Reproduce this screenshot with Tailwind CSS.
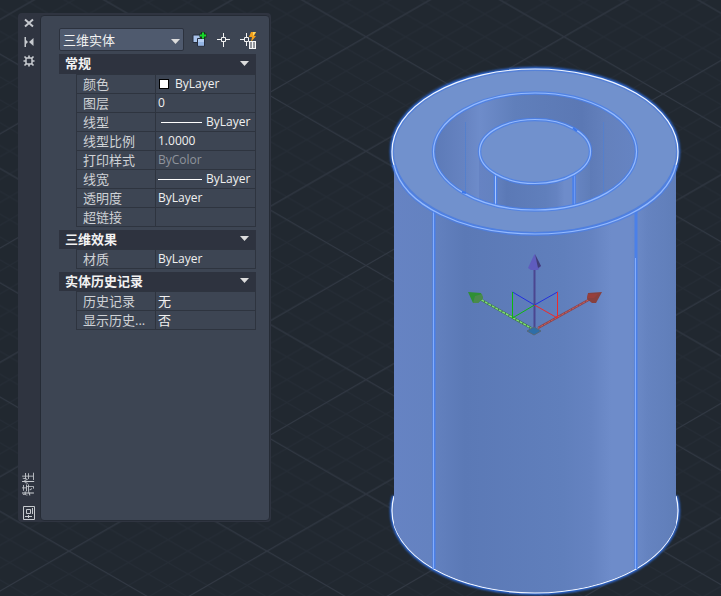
<!DOCTYPE html>
<html lang="zh-CN">

<head>
    <meta charset="utf-8">
    <meta name="viewport" content="width=device-width, initial-scale=1.0">
    <title>特性</title>
    <script src="https://cdn.jsdelivr.net/npm/@tailwindcss/browser@4"></script>
</head>

<body class="relative isolate flex min-h-screen overflow-hidden bg-[#212830] pt-[13px] pl-[18px] pb-[74px] font-['Open_Sans','Noto_Sans_CJK_SC',sans-serif] text-xs">

    <!-- MODEL SPACE -->
    <svg class="absolute inset-0 -z-10 h-full w-full" role="img" aria-label="三维实体">
        <defs>
            <pattern id="minor" x="69" y="94" width="39.6" height="22.86" patternUnits="userSpaceOnUse">
                <path d="M0 0L39.6 22.86M0 22.86L39.6 0" stroke="#262d37" fill="none" />
            </pattern>
            <pattern id="major" x="69" y="94" width="198" height="114.3" patternUnits="userSpaceOnUse">
                <path d="M0 0L198 114.3M0 114.3L198 0" stroke="#323944" fill="none" />
            </pattern>
            <linearGradient id="side">
                <stop offset="0" stop-color="#6683c3" />
                <stop offset=".13" stop-color="#6482c0" />
                <stop offset=".25" stop-color="#5b79b6" />
                <stop offset=".6" stop-color="#607fbc" />
                <stop offset=".7" stop-color="#6583c1" />
                <stop offset=".77" stop-color="#6e8cca" />
                <stop offset=".84" stop-color="#6e8cca" />
                <stop offset=".9" stop-color="#6583c0" />
                <stop offset="1" stop-color="#607eb9" />
            </linearGradient>
            <linearGradient id="bore">
                <stop offset="0" stop-color="#5c7ab7" />
                <stop offset=".15" stop-color="#6683c1" />
                <stop offset=".23" stop-color="#6e8cca" />
                <stop offset=".4" stop-color="#607fbb" />
                <stop offset=".73" stop-color="#5b78b4" />
                <stop offset=".85" stop-color="#6481bd" />
                <stop offset="1" stop-color="#6684c3" />
            </linearGradient>
            <clipPath id="boreClip">
                <ellipse cx="535" cy="152" rx="101" ry="58" />
            </clipPath>
            <filter id="glow" x="-10%" y="-10%" width="120%" height="120%">
                <feGaussianBlur stdDeviation="1" />
            </filter>
        </defs>
        <rect width="100%" height="100%" fill="url(#minor)" />
        <rect width="100%" height="100%" fill="url(#major)" />

        <!-- outer cylinder -->
        <g fill="none" stroke="#2f6de0" stroke-width="4" filter="url(#glow)">
            <ellipse cx="535" cy="151.500" rx="143" ry="82.500" />
            <path d="M394 496Q392 503 392 511A143 82 0 0 0 678 511Q678 503 676 496" />
        </g>
        <path d="M394 496Q392 503 392 511A143 82 0 0 0 678 511Q678 503 676 496" fill="#6380bd" stroke="#f0f5ff" stroke-width="1.200" />
        <path d="M394 151H676V525C662 565 604 592 535 592S408 565 394 525Z" fill="url(#side)" />
        <path d="M434 210V569M636 210V569" fill="none" stroke="#4b80e8" stroke-width="3" />
        <path d="M433.500 210V569M635.500 258V569" fill="none" stroke="#82adff" />

        <!-- top ring -->
        <ellipse cx="535" cy="151.500" rx="143" ry="82.500" fill="#7191cd" />
        <ellipse cx="535" cy="151.500" rx="142" ry="81.500" fill="none" stroke="#4478e0" stroke-width="2" stroke-opacity=".6" />
        <path d="M394 165Q392 160 392 151.500A143 82.500 0 0 1 678 151.500Q678 160 676 165" fill="none" stroke="#f0f5ff" stroke-width="1.200" />
        <path d="M394 165C403 205 463 234 535 234S667 205 676 165" fill="none" stroke="#4a7fe8" stroke-width="4" stroke-opacity=".7" />
        <path d="M394 165C403 205 463 234 535 234S667 205 676 165" fill="none" stroke="#94baff" stroke-width="1.200" />

        <!-- bore and inner core -->
        <g clip-path="url(#boreClip)">
            <rect x="433" y="93" width="204" height="118" fill="url(#bore)" />
            <path d="M465.500 122V195M603.500 122V195" stroke="#5580cc" />
            <path d="M479 152H590V212H479Z" fill="url(#side)" />
            <path d="M495.500 174V208M574 174V208" stroke="#4b80e8" stroke-width="3.500" />
            <path d="M495.500 174V208" stroke="#a5c5ff" />
            <path d="M574.500 174V208" stroke="#6b99f5" />
        </g>
        <ellipse cx="535" cy="151.500" rx="55.500" ry="32" fill="#7191cd" />
        <g fill="none">
            <g stroke="#4a7fe8" stroke-width="3.500" stroke-opacity=".8">
                <ellipse cx="535" cy="151.500" rx="101.500" ry="58.500" />
                <ellipse cx="535" cy="151.500" rx="55.500" ry="32" />
            </g>
            <g stroke="#94baff" stroke-width="1.200">
                <ellipse cx="535" cy="151.500" rx="101.500" ry="58.500" />
                <ellipse cx="535" cy="151.500" rx="55.500" ry="32" />
            </g>
        </g>
        <path d="M573 128l4 3M462 192l4 1" stroke="#3b76ea" stroke-width="2" />

        <!-- move gizmo -->
        <g fill="none">
            <path d="M534.500 269V328" stroke="#4b4690" stroke-width="2" />
            <path d="M478 298L531 328" stroke="#3c6f4c" stroke-width="2.500" />
            <path d="M478 298L531 328" stroke="#7fdf72" stroke-width="1.500" stroke-dasharray="3 1" />
            <path d="M592 298L538 328" stroke="#8c4550" stroke-width="2.500" />
            <path d="M592 298L538 328" stroke="#c25e5a" stroke-dasharray="3 1" />
            <path d="M512.500 292L534.500 305L557.500 292" stroke="#2330dd" />
            <path d="M512.500 292V318L534.500 305" stroke="#0db80d" />
            <path d="M534.500 305L557.500 318V292" stroke="#f02a2a" />
        </g>
        <path d="M534.500 254L541 266L538 270H531L528 268Z" fill="#5f5cbe" />
        <path d="M535 254L541 266L538 268Z" fill="#403e78" />
        <path d="M468 292L481 293L483 298L478 303H473Z" fill="#2f8f35" />
        <path d="M475 296L482 294L483 298L478 303H473Z" fill="#4a8a4c" />
        <path d="M602 292L588 293L587 299L592 303H596Z" fill="#87403f" />
        <path d="M588 294H598L594 298H587Z" fill="#973f3c" />
        <path d="M527 331L534 327L541 331L534 335Z" fill="#2e6ea8" stroke="#576878" />
    </svg>

    <!-- PROPERTIES PALETTE -->
    <aside class="flex w-[253px] rounded-sm bg-[#2f3440] pt-0.5 pr-px pb-px">
        <div class="flex w-[22px] shrink-0 flex-col items-center pb-px text-[#c6c9ce]">
            <button class="mt-px h-[14px]" aria-label="关闭">
                <svg class="size-[14px]" viewBox="0 0 14 14" fill="none" stroke="currentColor" stroke-width="2">
                    <path d="M3 3.500L11 10.500M11 3.500L3 10.500" />
                </svg>
            </button>
            <button class="mt-[5px] h-[14px]" aria-label="自动隐藏">
                <svg class="size-[14px]" viewBox="0 0 14 14" fill="currentColor">
                    <path d="M2.500 2H4v3l2 2-2 2v3H2.500zM11.500 3v8L7 7z" />
                </svg>
            </button>
            <button class="mt-[5px] h-[14px]" aria-label="特性设置">
                <svg class="size-[14px]" viewBox="0 0 14 14" fill="none" stroke="currentColor">
                    <path d="M5 4h4l1 1v4l-1 1H5L4 9V5z" stroke-width="1.500" />
                    <path d="M7 1.500V4M7 10v2.500M1.500 7H4M10 7h2.500M2.500 2.500l2 2M9.500 9.500l2 2M11.500 2.500l-2 2M4.500 9.500l-2 2" stroke-width="1.700" />
                </svg>
            </button>
            <div class="mt-auto mb-2.5 rotate-180 text-[12px] leading-[14px] [text-orientation:sideways] [writing-mode:vertical-rl]">特性</div>
            <button class="h-[14px]" aria-label="特性菜单">
                <svg class="h-[14px] w-3" viewBox="0 0 12 14" fill="none" stroke="currentColor">
                    <path d="M.5.500h11v13H.5zM3.500 3.500h4v4h-4zM9.500 2v6M2 10.500h7M5.500 9v3" />
                </svg>
            </button>
        </div>

        <main class="min-w-0 flex-1 rounded-sm border border-[#252b35] bg-[#3d4553] pt-3 pr-[13px] pl-[18px]">
            <div class="flex items-center">
                <div class="relative w-[125px] shrink-0">
                    <select aria-label="选择对象类型" class="block h-[23px] w-full appearance-none rounded-xs border border-[#2c323e] bg-[#4f5a6e] pl-[3px] text-[13px] leading-5 text-[#f2f2f2]">
                        <option>三维实体</option>
                    </select>
                    <svg class="pointer-events-none absolute top-[11px] right-1 h-[5px] w-[9px]" viewBox="0 0 9 5" fill="#dcdcdc"><path d="M0 0h9L4.500 5z" /></svg>
                </div>
                <button class="ml-2 size-4 shrink-0" aria-label="切换 PICKADD 系统变量的值">
                    <svg class="size-4" viewBox="0 0 16 16">
                        <path d="M1 3h7.500v7.500H1z" fill="#a9c3ea" stroke="#252c3c" />
                        <path d="M5.500 6.500h7V14h-7z" fill="#b4cdf2" stroke="#252c3c" />
                        <path d="M6 10h6v3.500H6z" fill="#94b5e4" />
                        <path d="M11 0v7M7.500 3.500h7" stroke="#14361b" stroke-width="4" />
                        <path d="M11 .5v6M8 3.500h6" stroke="#18d52a" stroke-width="2" />
                    </svg>
                </button>
                <button class="ml-[7px] size-4 shrink-0" aria-label="选择对象">
                    <svg class="size-4" viewBox="0 0 16 16" fill="none" stroke="#f2f2f2">
                        <path d="M8.500 1v5M8.500 10v5M2 7.500h4M11 7.500h4M6.500 5.500h4v4h-4z" />
                    </svg>
                </button>
                <button class="ml-2 size-[18px] shrink-0" aria-label="快速选择">
                    <svg class="size-[18px]" viewBox="0 0 18 18" fill="none">
                        <path d="M7.500 2v4M7.500 11v4M1 8.500h4M5.500 6.500h4v4h-4z" stroke="#f2f2f2" />
                        <path d="M12 1h5l-2 4h2l-5 6 1-5h-3z" fill="#f2a01d" />
                        <path d="M14 1h3l-3 4z" fill="#ffd65e" />
                        <path d="M10 10h7v8h-7z" fill="#f5f5f5" />
                        <path d="M11 12h2M14 12h2M11 14h2M14 14h2M11 16h2M14 16h2" stroke="#303642" />
                    </svg>
                </button>
            </div>

            <section class="mt-[3px]">
                <button class="flex h-5 w-full items-center justify-between bg-[#2e333f] pr-[7px] pb-0.5 pl-1.5 text-[13px] leading-4 font-bold text-[#f2f2f2]" aria-expanded="true">
                    常规
                    <svg class="h-[5px] w-[9px]" viewBox="0 0 9 5" fill="#dcdcdc"><path d="M0 0h9L4.500 5z" /></svg>
                </button>
                <div class="pl-[17px]">
                    <table class="w-full table-fixed border-collapse text-[#f0f0f0] [&_td]:border [&_td]:border-[#2e343f] [&_td]:px-0.5 [&_th]:w-[79px] [&_th]:border [&_th]:border-[#2e343f] [&_th]:pl-1.5 [&_th]:text-left [&_th]:text-[13px] [&_th]:font-normal [&_th]:whitespace-nowrap [&_th]:text-[#cfd2d6] [&_tr]:h-[19px] [&_tr]:leading-4">
                        <tr>
                            <th scope="row">颜色</th>
                            <td>
                                <div class="flex items-center gap-1.5 pl-px"><span class="size-2.5 border border-black bg-white"></span>ByLayer</div>
                            </td>
                        </tr>
                        <tr>
                            <th scope="row">图层</th>
                            <td>0</td>
                        </tr>
                        <tr>
                            <th scope="row">线型</th>
                            <td>
                                <div class="flex items-center gap-1 pl-[3px]"><span class="h-px w-[41px] bg-white"></span>ByLayer</div>
                            </td>
                        </tr>
                        <tr>
                            <th scope="row">线型比例</th>
                            <td>1.0000</td>
                        </tr>
                        <tr>
                            <th scope="row">打印样式</th>
                            <td class="text-[#8f949c]">ByColor</td>
                        </tr>
                        <tr>
                            <th scope="row">线宽</th>
                            <td>
                                <div class="flex items-center gap-1"><span class="h-px w-11 bg-white"></span>ByLayer</div>
                            </td>
                        </tr>
                        <tr>
                            <th scope="row">透明度</th>
                            <td>ByLayer</td>
                        </tr>
                        <tr>
                            <th scope="row">超链接</th>
                            <td></td>
                        </tr>
                    </table>
                </div>
            </section>

            <section class="mt-[3px]">
                <button class="flex h-[19px] w-full items-center justify-between bg-[#2e333f] pr-[7px] pb-0.5 pl-1.5 text-[13px] leading-4 font-bold text-[#f2f2f2]" aria-expanded="true">
                    三维效果
                    <svg class="h-[5px] w-[9px]" viewBox="0 0 9 5" fill="#dcdcdc"><path d="M0 0h9L4.500 5z" /></svg>
                </button>
                <div class="pl-[17px]">
                    <table class="w-full table-fixed border-collapse text-[#f0f0f0] [&_td]:border [&_td]:border-[#2e343f] [&_td]:px-0.5 [&_th]:w-[79px] [&_th]:border [&_th]:border-[#2e343f] [&_th]:pl-1.5 [&_th]:text-left [&_th]:text-[13px] [&_th]:font-normal [&_th]:whitespace-nowrap [&_th]:text-[#cfd2d6] [&_tr]:h-[19px] [&_tr]:leading-4">
                        <tr>
                            <th scope="row">材质</th>
                            <td>ByLayer</td>
                        </tr>
                    </table>
                </div>
            </section>

            <section class="mt-[3px]">
                <button class="flex h-[19px] w-full items-center justify-between bg-[#2e333f] pr-[7px] pb-0.5 pl-1.5 text-[13px] leading-4 font-bold text-[#f2f2f2]" aria-expanded="true">
                    实体历史记录
                    <svg class="h-[5px] w-[9px]" viewBox="0 0 9 5" fill="#dcdcdc"><path d="M0 0h9L4.500 5z" /></svg>
                </button>
                <div class="pl-[17px]">
                    <table class="w-full table-fixed border-collapse text-[#f0f0f0] [&_td]:border [&_td]:border-[#2e343f] [&_td]:px-0.5 [&_th]:w-[79px] [&_th]:border [&_th]:border-[#2e343f] [&_th]:pl-1.5 [&_th]:text-left [&_th]:text-[13px] [&_th]:font-normal [&_th]:whitespace-nowrap [&_th]:text-[#cfd2d6] [&_tr]:h-[19px] [&_tr]:leading-4">
                        <tr>
                            <th scope="row">历史记录</th>
                            <td class="text-[13px]">无</td>
                        </tr>
                        <tr>
                            <th scope="row">显示历史...</th>
                            <td class="text-[13px]">否</td>
                        </tr>
                    </table>
                </div>
            </section>
        </main>
    </aside>
</body>

</html>
